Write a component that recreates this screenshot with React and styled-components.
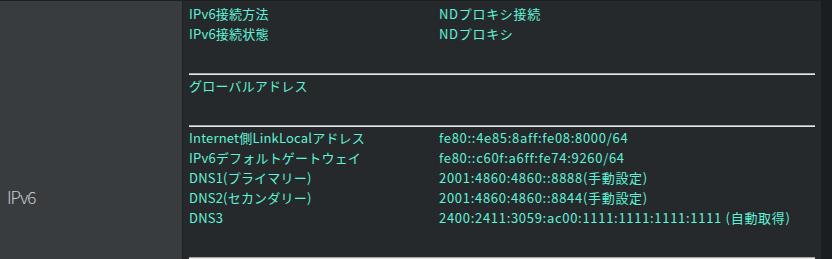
import React from 'react'
import styled, { createGlobalStyle } from 'styled-components'

const GlobalStyle = createGlobalStyle`
    html, body {
        margin: 0;
        padding: 0;
        background: #1b1e20;
        overflow: hidden;
    }
`

const sections = [
    [
        ['IPv6接続方法', 'NDプロキシ接続'],
        ['IPv6接続状態', 'NDプロキシ'],
    ],
    [['グローバルアドレス', '']],
    [
        ['Internet側LinkLocalアドレス', 'fe80::4e85:8aff:fe08:8000/64'],
        ['IPv6デフォルトゲートウェイ', 'fe80::c60f:a6ff:fe74:9260/64'],
        ['DNS1(プライマリー)', '2001:4860:4860::8888(手動設定)'],
        ['DNS2(セカンダリー)', '2001:4860:4860::8844(手動設定)'],
        ['DNS3', '2400:2411:3059:ac00:1111:1111:1111:1111 (自動取得)'],
    ],
]

function App() {
    return (
        <>
            <GlobalStyle />
            <Table>
                <HeaderCell>IPv6</HeaderCell>
                <DataCell>
                    {sections.map((rows, i) => (
                        <Section key={i}>
                            <Rows>
                                {rows.map(([label, value]) => (
                                    <Row key={label}>
                                        <Label>{label}</Label>
                                        <Value>{value}</Value>
                                    </Row>
                                ))}
                            </Rows>
                            <Rule />
                        </Section>
                    ))}
                </DataCell>
            </Table>
        </>
    )
}

const Table = styled.div`
    display: flex;
    width: 821px;
    min-height: 392px;
    border-top: 1px solid #1d2022;
    box-sizing: border-box;
`

const HeaderCell = styled.div`
    width: 183px;
    flex-shrink: 0;
    display: flex;
    align-items: center;
    padding-left: 7px;
    box-sizing: border-box;
    background: #383c3f;
    border-right: 1px solid #1f2224;
    color: #c9c9c9;
    font-family: 'Noto Sans CJK JP', 'Noto Sans', sans-serif;
    font-weight: 300;
    font-size: 17px;
    letter-spacing: -1px;
`

const DataCell = styled.div`
    flex: 1;
    display: flex;
    flex-direction: column;
    padding: 2px 6px 0 6px;
    background: #25292c;
    font-family: 'Noto Sans CJK JP', 'Noto Sans', sans-serif;
    font-size: 13px;
    color: #60f2d6;
`

const Section = styled.div`
    display: flex;
    flex-direction: column;
`

const Rows = styled.div`
    display: flex;
    flex-direction: column;
    padding-bottom: 30px;
`

const Row = styled.div`
    display: grid;
    grid-template-columns: 250px 1fr;
    height: 20px;
    align-items: center;
    white-space: nowrap;
`

const Label = styled.span`
    letter-spacing: 0.2px;
`

const Value = styled.span`
    letter-spacing: 0.7px;
`

const Rule = styled.div`
    height: 0;
    border-top: 1px solid #a8a8a8;
    border-bottom: 1px solid #e6e6e6;
`

export default App
